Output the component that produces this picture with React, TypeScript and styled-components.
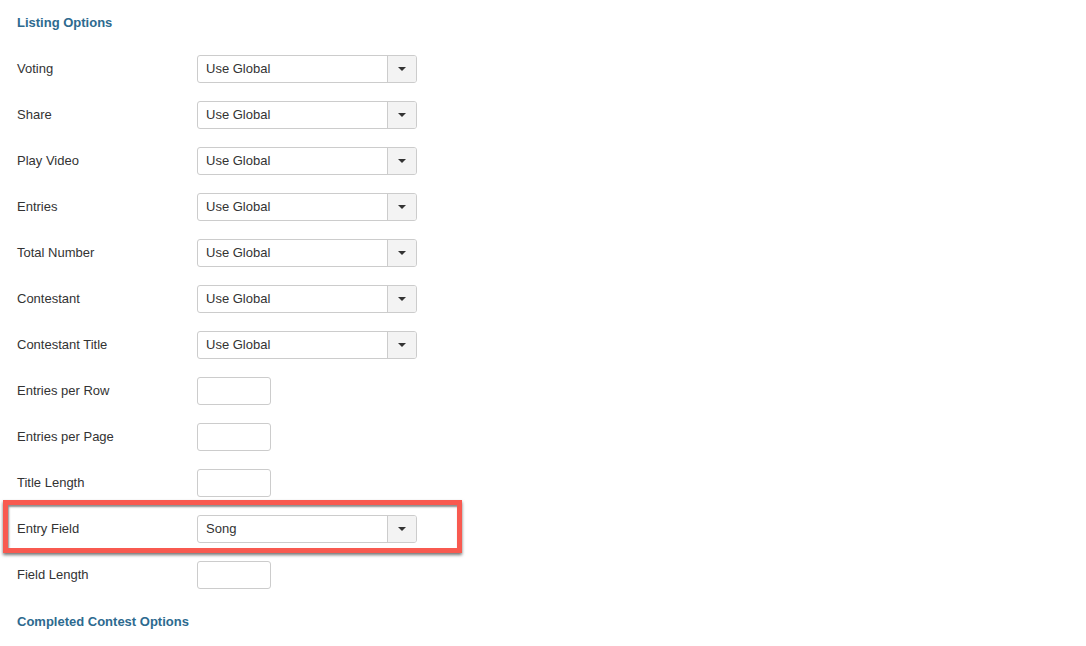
import * as React from 'react';
import styled, { createGlobalStyle } from 'styled-components';

type Field = {
  label: string;
  kind: 'select' | 'text';
  value?: string;
  highlight?: boolean;
};

const FIELDS: Field[] = [
  { label: 'Voting', kind: 'select', value: 'Use Global' },
  { label: 'Share', kind: 'select', value: 'Use Global' },
  { label: 'Play Video', kind: 'select', value: 'Use Global' },
  { label: 'Entries', kind: 'select', value: 'Use Global' },
  { label: 'Total Number', kind: 'select', value: 'Use Global' },
  { label: 'Contestant', kind: 'select', value: 'Use Global' },
  { label: 'Contestant Title', kind: 'select', value: 'Use Global' },
  { label: 'Entries per Row', kind: 'text' },
  { label: 'Entries per Page', kind: 'text' },
  { label: 'Title Length', kind: 'text' },
  { label: 'Entry Field', kind: 'select', value: 'Song', highlight: true },
  { label: 'Field Length', kind: 'text' },
];

const SelectBox: React.FC<{ value: string }> = ({ value }) => (
  <Select>
    <SelectValue>{value}</SelectValue>
    <SelectButton>
      <Caret />
    </SelectButton>
  </Select>
);

export default function App() {
  return (
    <>
      <GlobalStyle />
      <Page>
        <SectionTitle>Listing Options</SectionTitle>
        {FIELDS.map((f) => (
          <Row key={f.label}>
            <Label>{f.label}</Label>
            {f.kind === 'select' ? (
              <SelectBox value={f.value ?? ''} />
            ) : (
              <TextInput />
            )}
            {f.highlight && <Highlight />}
          </Row>
        ))}
        <SectionTitle $last>Completed Contest Options</SectionTitle>
      </Page>
    </>
  );
}

const GlobalStyle = createGlobalStyle`
  html, body {
    margin: 0;
    padding: 0;
    background: #ffffff;
  }
  body {
    font-family: "Liberation Sans", Arial, sans-serif;
    font-size: 13px;
    color: #333333;
  }
`;

const Page = styled.div`
  padding: 0 0 0 17px;
  display: flex;
  flex-direction: column;
`;

const SectionTitle = styled.div<{ $last?: boolean }>`
  height: ${(p) => (p.$last ? '48px' : '45px')};
  display: flex;
  align-items: center;
  font-weight: bold;
  font-size: 13px;
  color: #2d6a8f;
`;

const Row = styled.div`
  position: relative;
  height: 46px;
  display: flex;
  align-items: center;
`;

const Label = styled.div`
  width: 180px;
  flex-shrink: 0;
  font-size: 13px;
  color: #333333;
`;

const Control = `
  height: 28px;
  margin-top: 1px;
  box-sizing: border-box;
  border: 1px solid #cccccc;
  border-radius: 3px;
  background: #ffffff;
`;

const Select = styled.div`
  width: 220px;
  display: flex;
  ${Control}
`;

const SelectValue = styled.div`
  flex: 1;
  display: flex;
  align-items: center;
  padding-left: 8px;
  font-size: 13px;
  color: #333333;
`;

const SelectButton = styled.div`
  width: 28px;
  border-left: 1px solid #cccccc;
  background: #f3f3f3;
  border-radius: 0 2px 2px 0;
  display: flex;
  align-items: center;
  justify-content: center;
`;

const Caret = styled.span`
  width: 0;
  height: 0;
  border-left: 4px solid transparent;
  border-right: 4px solid transparent;
  border-top: 4px solid #333333;
`;

const TextInput = styled.div`
  width: 74px;
  ${Control}
`;

const Highlight = styled.div`
  position: absolute;
  left: -14px;
  top: -5px;
  width: 459px;
  height: 53px;
  box-sizing: border-box;
  border: 5px solid #f85a50;
  box-shadow: 0 2px 3px rgba(0, 0, 0, 0.55), inset 1px 2px 2px rgba(0, 0, 0, 0.45);
  pointer-events: none;
`;
